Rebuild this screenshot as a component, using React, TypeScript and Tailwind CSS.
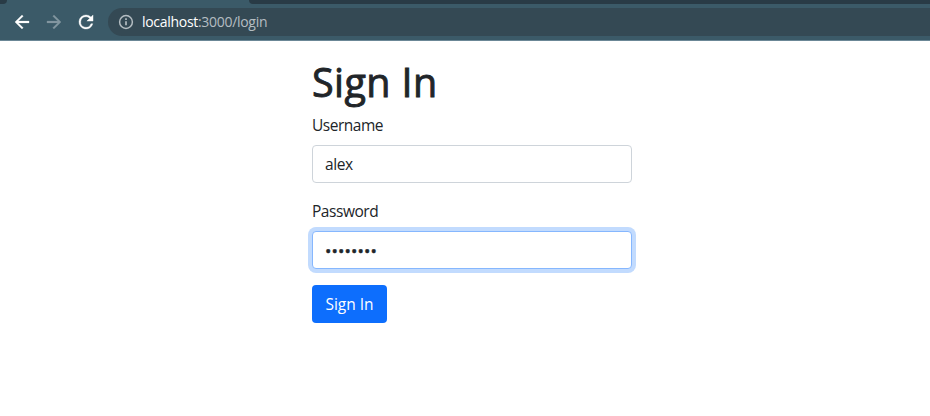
import React from "react";

function Toolbar() {
  return (
    <header className="h-[41px] border-b border-[#6b8796] bg-[#3b5a68]">
      <div className="flex h-1 bg-[#3b5a68]">
        <div className="w-[7px] rounded-br-[5px] bg-[#293b46]" />
        <div className="flex-1" />
        <div className="w-[681px] rounded-bl-[6px] bg-[#293b46]" />
      </div>
      <div className="flex h-9 items-center pl-[10px]">
        <button className="mr-2 flex size-6 items-center justify-center" aria-label="Back">
          <svg width="22" height="22" viewBox="-0.5 -0.5 25 25" fill="#fff" stroke="#fff" strokeWidth="0.3">
            <path d="M20 11H7.83l5.59-5.59L12 4l-8 8 8 8 1.41-1.41L7.83 13H20v-2z" />
          </svg>
        </button>
        <button className="mr-2 flex size-6 items-center justify-center" aria-label="Forward">
          <svg width="22" height="22" viewBox="-0.5 -0.5 25 25" fill="#8296a0" stroke="#8296a0" strokeWidth="0.3">
            <path d="M12 4l-1.41 1.41L16.17 11H4v2h12.17l-5.58 5.59L12 20l8-8z" />
          </svg>
        </button>
        <button className="mr-[10px] flex size-6 items-center justify-center" aria-label="Reload">
          <svg width="22" height="22" viewBox="-0.5 -0.5 25 25" fill="#fff" stroke="#fff" strokeWidth="0.4">
            <path d="M17.65 6.35A7.958 7.958 0 0 0 12 4a8 8 0 1 0 7.73 10h-2.08A6 6 0 1 1 12 6c1.66 0 3.14.69 4.22 1.78L13 11h7V4l-2.35 2.35z" />
          </svg>
        </button>
        <div className="flex h-7 flex-1 items-center rounded-l-full bg-[#344954] pl-[10px]">
          <svg width="16" height="16" viewBox="0 0 16 16" fill="none" stroke="#b4bdc2" strokeWidth="1.5">
            <circle cx="8" cy="8" r="6.4" />
            <path d="M8 7.2v4M8 4.3v1.6" strokeWidth="1.7" />
          </svg>
          <span className="ml-2 text-[14px] leading-5 tracking-[-0.3px] text-[#b4bdc2]">
            <span className="text-white">localhost</span>:3000/login
          </span>
        </div>
      </div>
    </header>
  );
}

export default function App() {
  return (
    <div className="h-[416px] overflow-hidden bg-white font-['Open_Sans','Noto_Sans',sans-serif] text-[#212529]">
      <Toolbar />
      <main className="ml-[312px] w-80 pt-[17px]">
        <h1 className="mb-[7px] text-[39.5px] leading-[48px] font-normal tracking-[0.4px] [-webkit-text-stroke:0.9px_#212529]">
          Sign In
        </h1>
        <form>
          <div className="mb-4">
            <label htmlFor="username" className="mb-2 block text-[15.5px] leading-6 tracking-[-0.48px]">
              Username
            </label>
            <input
              id="username"
              type="text"
              defaultValue="alex"
              className="block h-[38px] w-full rounded border border-[#ced4da] bg-white px-3 text-[15.5px] tracking-[-0.4px] outline-none"
            />
          </div>
          <div className="mb-4">
            <label htmlFor="password" className="mb-2 block text-[15.5px] leading-6 tracking-[-0.45px]">
              Password
            </label>
            <input
              id="password"
              type="password"
              defaultValue="12345678"
              className="block h-[38px] w-full rounded border border-[#86b7fe] bg-white px-3 pt-px text-[17px] tracking-[0.1px] shadow-[0_0_0_4px_#c2dbfe] outline-none [-webkit-text-stroke:0.4px_#212529]"
            />
          </div>
          <button
            type="button"
            className="h-[38px] w-[75px] rounded bg-[#0d6efd] pt-px text-[15.5px] whitespace-nowrap text-white"
          >
            Sign In
          </button>
        </form>
      </main>
    </div>
  );
}
